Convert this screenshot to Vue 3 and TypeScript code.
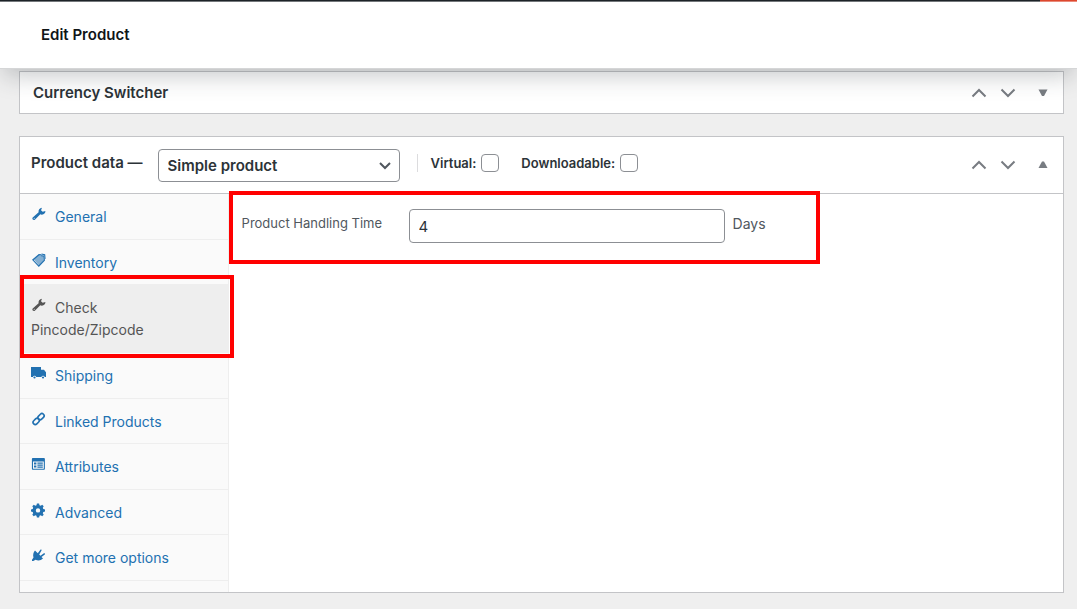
<script setup lang="ts">
import { ref } from 'vue'

type IconName = 'wrench' | 'tags' | 'truck' | 'link' | 'table' | 'gear' | 'plug'
interface Tab {
  label: string
  icon: IconName
  active?: boolean
}

const tabs: Tab[] = [
  { label: 'General', icon: 'wrench' },
  { label: 'Inventory', icon: 'tags' },
  { label: 'Check Pincode/Zipcode', icon: 'wrench', active: true },
  { label: 'Shipping', icon: 'truck' },
  { label: 'Linked Products', icon: 'link' },
  { label: 'Attributes', icon: 'table' },
  { label: 'Advanced', icon: 'gear' },
  { label: 'Get more options', icon: 'plug' },
]

const productType = ref('simple')
const virtual = ref(false)
const downloadable = ref(false)
const handlingTime = ref('4')
</script>

<template>
  <div class="page">
    <div class="admin-bar"><span class="notice"></span></div>
    <header class="top">
      <h1>Edit Product</h1>
    </header>

    <main>
      <section class="box switcher">
        <h2>Currency Switcher</h2>
        <div class="actions">
          <button type="button" aria-label="Move up"><svg width="16" height="10" viewBox="0 0 16 10"><path d="M1.5 8.5 8 2l6.5 6.5" /></svg></button>
          <button type="button" aria-label="Move down"><svg width="16" height="10" viewBox="0 0 16 10"><path d="M1.5 1.500 8 8l6.500-6.500" /></svg></button>
          <button type="button" class="toggle" aria-label="Expand"><svg width="10" height="8" viewBox="0 0 10 8"><path d="M.5.500h9L6 7H4z" /></svg></button>
        </div>
      </section>

      <section class="box product">
        <div class="box-head">
          <h2>Product data —</h2>
          <div class="select">
            <select v-model="productType" aria-label="Product type">
              <option value="simple">Simple product</option>
              <option value="grouped">Grouped product</option>
            </select>
            <svg width="14" height="10" viewBox="0 0 14 10"><path d="M2 2l5 5 5-5" /></svg>
          </div>
          <div class="checks">
            <label>Virtual: <input v-model="virtual" type="checkbox" /></label>
            <label>Downloadable: <input v-model="downloadable" type="checkbox" /></label>
          </div>
          <div class="actions">
            <button type="button" aria-label="Move up"><svg width="16" height="10" viewBox="0 0 16 10"><path d="M1.5 8.5 8 2l6.5 6.5" /></svg></button>
            <button type="button" aria-label="Move down"><svg width="16" height="10" viewBox="0 0 16 10"><path d="M1.5 1.500 8 8l6.500-6.500" /></svg></button>
            <button type="button" class="toggle" aria-label="Collapse"><svg width="10" height="8" viewBox="0 0 10 8"><path d="M.5 7h9L6 .5H4z" /></svg></button>
          </div>
        </div>

        <div class="content">
          <nav>
            <ul>
              <li v-for="tab in tabs" :key="tab.label" :class="{ active: tab.active }">
                <a href="#">
                  <svg class="icon" width="16" height="16" viewBox="0 0 16 16" aria-hidden="true">
                    <path v-if="tab.icon === 'wrench'" fill-rule="evenodd" d="M11 1.700 10 4.200l1.700 1.600 2.700-.7c.1 2-1.500 3.700-3.600 3.600-.6 0-1.100-.2-1.500-.4l-5.200 5.200c-.7.7-1.700.7-2.300.100s-.6-1.600.2-2.300l5.600-5C7.100 3.900 8.600 1.900 11 1.700zM3.200 11.700a.5.5 0 1 0 0 1 .5.5 0 0 0 0-1z" />
                    <g v-else-if="tab.icon === 'tags'">
                      <path opacity=".55" d="M2.500 7 8 2.500l4.500 1.500.3 4L8 13.500z" />
                      <path d="M1 7.800 7.800 2l2.700.3v1L8.300 3.200 2.700 8 7.700 13.200 12.700 8l-.4-3.500-2.200-.2.2-1 3 .3.7 4.800L7.800 15z" />
                      <path d="m10.500 1.500 3.700.8.4 4.700-1-.3-.4-3.500-2.700-.6z" />
                    </g>
                    <g v-else-if="tab.icon === 'truck'">
                      <path d="M0 2h10v2.700h3l2 2.500V12h-1.300a1.700 1.700 0 0 0-3.300 0H5.200a1.700 1.700 0 0 0-3.300 0H0z" />
                      <circle cx="3.500" cy="12.500" r="1.100" />
                      <circle cx="12" cy="12.500" r="1.100" />
                    </g>
                    <g v-else-if="tab.icon === 'link'" class="stroke">
                      <rect x="6.500" y="3.500" width="7" height="4.400" rx="2.200" transform="rotate(-45 10 5.700)" />
                      <rect x="1.700" y="8.200" width="7" height="4.400" rx="2.200" transform="rotate(-45 5.200 10.400)" />
                    </g>
                    <path v-else-if="tab.icon === 'table'" fill-rule="evenodd" d="M2 2h10.800c.6 0 1.100.5 1.100 1.100v9.600c0 .6-.5 1.100-1.100 1.100H2c-.6 0-1.100-.5-1.100-1.100V3.100C.9 2.500 1.400 2 2 2zm0 3.400v7.300h10.800V5.400zM3 6.600h2.400v1.800H3zm3.400 0h5.400v1.200H6.400zM6.400 8.600h5.400v1.200H6.400zM3 9.600h2.400v1.800H3zm3.400 1h5.400v1.200H6.400z" />
                    <path v-else-if="tab.icon === 'gear'" fill-rule="evenodd" transform="translate(-1)" d="M6.900 1.500h2.200l.4 1.700 1.200.5 1.500-.9 1.500 1.500-.9 1.500.5 1.200 1.700.4v2.200l-1.700.4-.5 1.200.9 1.500-1.500 1.500-1.500-.9-1.200.5-.4 1.700H6.900l-.4-1.700-1.200-.5-1.500.9-1.500-1.500.9-1.500-.5-1.200L1 9.600V7.400L2.700 7l.5-1.200-.9-1.500 1.500-1.500 1.500.9 1.200-.5zM8 6.200a2.200 2.200 0 1 0 0 4.400 2.200 2.200 0 0 0 0-4.400z" />
                    <path v-else d="M4 3.500 5.500 5 6.800 6.300l2.600-3.600c.7-.6 1.500.2 1.100.9L8.200 7.500l1.300 1.300 3.400-2.500c.8-.4 1.500.4.900 1.100l-3.300 2.500 1.500 1.700c-2.200 2.200-5.200 2.300-7.400 1.200L2.300 14H1v-1.300l1.500-2.200C1.700 8.200 2.300 5.300 4 3.500z" />
                  </svg>
                  <span>{{ tab.label }}</span>
                </a>
                <span v-if="tab.active" class="mark" aria-hidden="true"></span>
              </li>
            </ul>
          </nav>
          <div class="panel">
            <div class="field">
              <label for="handling">Product Handling Time</label>
              <input id="handling" v-model="handlingTime" type="text" />
              <span>Days</span>
            </div>
            <span class="mark" aria-hidden="true"></span>
          </div>
        </div>
      </section>
    </main>
  </div>
</template>

<style>
body {
  margin: 0;
  background: #efefef;
}
</style>

<style scoped>
* {
  box-sizing: border-box;
}
.page {
  font-family: Inter, "Liberation Sans", sans-serif;
  font-size: 14px;
  line-height: 22px;
  color: #2c3338;
}
h1, h2 {
  margin: 0;
  font-size: 15px;
  font-weight: 600;
}
.admin-bar {
  display: flex;
  justify-content: flex-end;
  height: 2px;
  background: linear-gradient(#1d2327 50%, #777b7e 50%);
}
.notice {
  width: 37px;
  background: linear-gradient(#e2492f 50%, #ee8d7c 50%);
}
.top {
  position: relative;
  display: flex;
  align-items: center;
  height: 67px;
  padding: 0 41px;
  background: #fff;
  border-bottom: 1px solid #d5d6d7;
  box-shadow: 0 10px 24px -4px rgba(44, 51, 56, 0.28);
}
.top h1 {
  color: #101517;
}
main {
  padding: 2px 13px 16px 19px;
}
.box {
  background: #fff;
  border: 1px solid #c3c4c7;
}
.switcher {
  display: flex;
  align-items: center;
  justify-content: space-between;
  height: 43px;
  padding: 0 10px 0 13px;
  margin-bottom: 22px;
}
.actions {
  display: flex;
  align-items: center;
}
.actions button {
  display: flex;
  align-items: center;
  justify-content: center;
  width: 29px;
  height: 30px;
  padding: 0;
  border: 0;
  background: none;
}
.actions .toggle {
  width: 20px;
  margin-left: 11px;
}
.actions path {
  fill: none;
  stroke: #787c82;
  stroke-width: 2;
}
.actions .toggle path {
  fill: #787c82;
  stroke: none;
}
.box-head {
  display: flex;
  align-items: center;
  height: 57px;
  padding: 0 10px 0 11px;
  border-bottom: 1px solid #c3c4c7;
}
.box-head h2 {
  margin-right: 15px;
  padding-bottom: 4px;
}
.select {
  position: relative;
  width: 242px;
}
.select select {
  display: block;
  width: 100%;
  height: 33px;
  padding: 0 28px 0 9px;
  appearance: none;
  border: 1px solid #8c8f94;
  border-radius: 4px;
  background: #fff;
  font: 600 15px Inter, "Liberation Sans", sans-serif;
  color: #2c3338;
}
.select svg {
  position: absolute;
  top: 12px;
  right: 8px;
  fill: none;
  stroke: #50575e;
  stroke-width: 2;
  pointer-events: none;
}
.checks {
  display: flex;
  align-items: center;
  gap: 22px;
  height: 18px;
  margin: 0 auto 4px 17px;
  padding-left: 13px;
  border-left: 1px solid #dcdcde;
  font-size: 13px;
  font-weight: 600;
}
.checks label {
  display: flex;
  align-items: center;
  gap: 5px;
}
.checks input {
  width: 18px;
  height: 18px;
  margin: 0;
  appearance: none;
  border: 1px solid #8c8f94;
  border-radius: 4px;
  background: #fff;
}
.content {
  display: flex;
  min-height: 398px;
}
nav {
  flex: none;
  width: 20%;
  background: #fafafa;
  border-right: 1px solid #eee;
}
ul {
  display: grid;
  grid-template-rows: 2fr 2fr 3fr repeat(5, 2fr);
  height: 387px;
  margin: 0;
  padding: 0;
  list-style: none;
}
li {
  position: relative;
  border-bottom: 1px solid #eee;
}
li a {
  display: block;
  height: 100%;
  padding: 12px 20px 0 11px;
  color: #2271b1;
  text-decoration: none;
}
li.active a {
  background: #eee;
  color: #555;
}
.icon {
  width: 16px;
  height: 16px;
  margin-right: 8px;
  fill: currentColor;
}
.icon .stroke {
  fill: none;
  stroke: currentColor;
  stroke-width: 1.6;
}
.mark {
  position: absolute;
  z-index: 1;
  border: 4px solid #f00;
  pointer-events: none;
}
li .mark {
  inset: -10px -6px -6px 0;
}
.panel {
  position: relative;
  flex: 1;
}
.panel .mark {
  top: -3px;
  left: 0;
  width: 591px;
  max-width: 100%;
  height: 73px;
}
.field {
  display: flex;
  align-items: center;
  padding: 15px 13px;
  color: #50575e;
}
.field label {
  width: 156px;
  margin-right: 11px;
  padding-bottom: 6px;
  font-size: 13px;
}
.field input {
  width: 316px;
  height: 34px;
  margin-right: 8px;
  padding: 0 9px;
  border: 1px solid #8c8f94;
  border-radius: 4px;
  background: #fff;
  font: 15px Inter, "Liberation Sans", sans-serif;
  color: #2c3338;
}
.field span {
  padding-bottom: 4px;
}
</style>
